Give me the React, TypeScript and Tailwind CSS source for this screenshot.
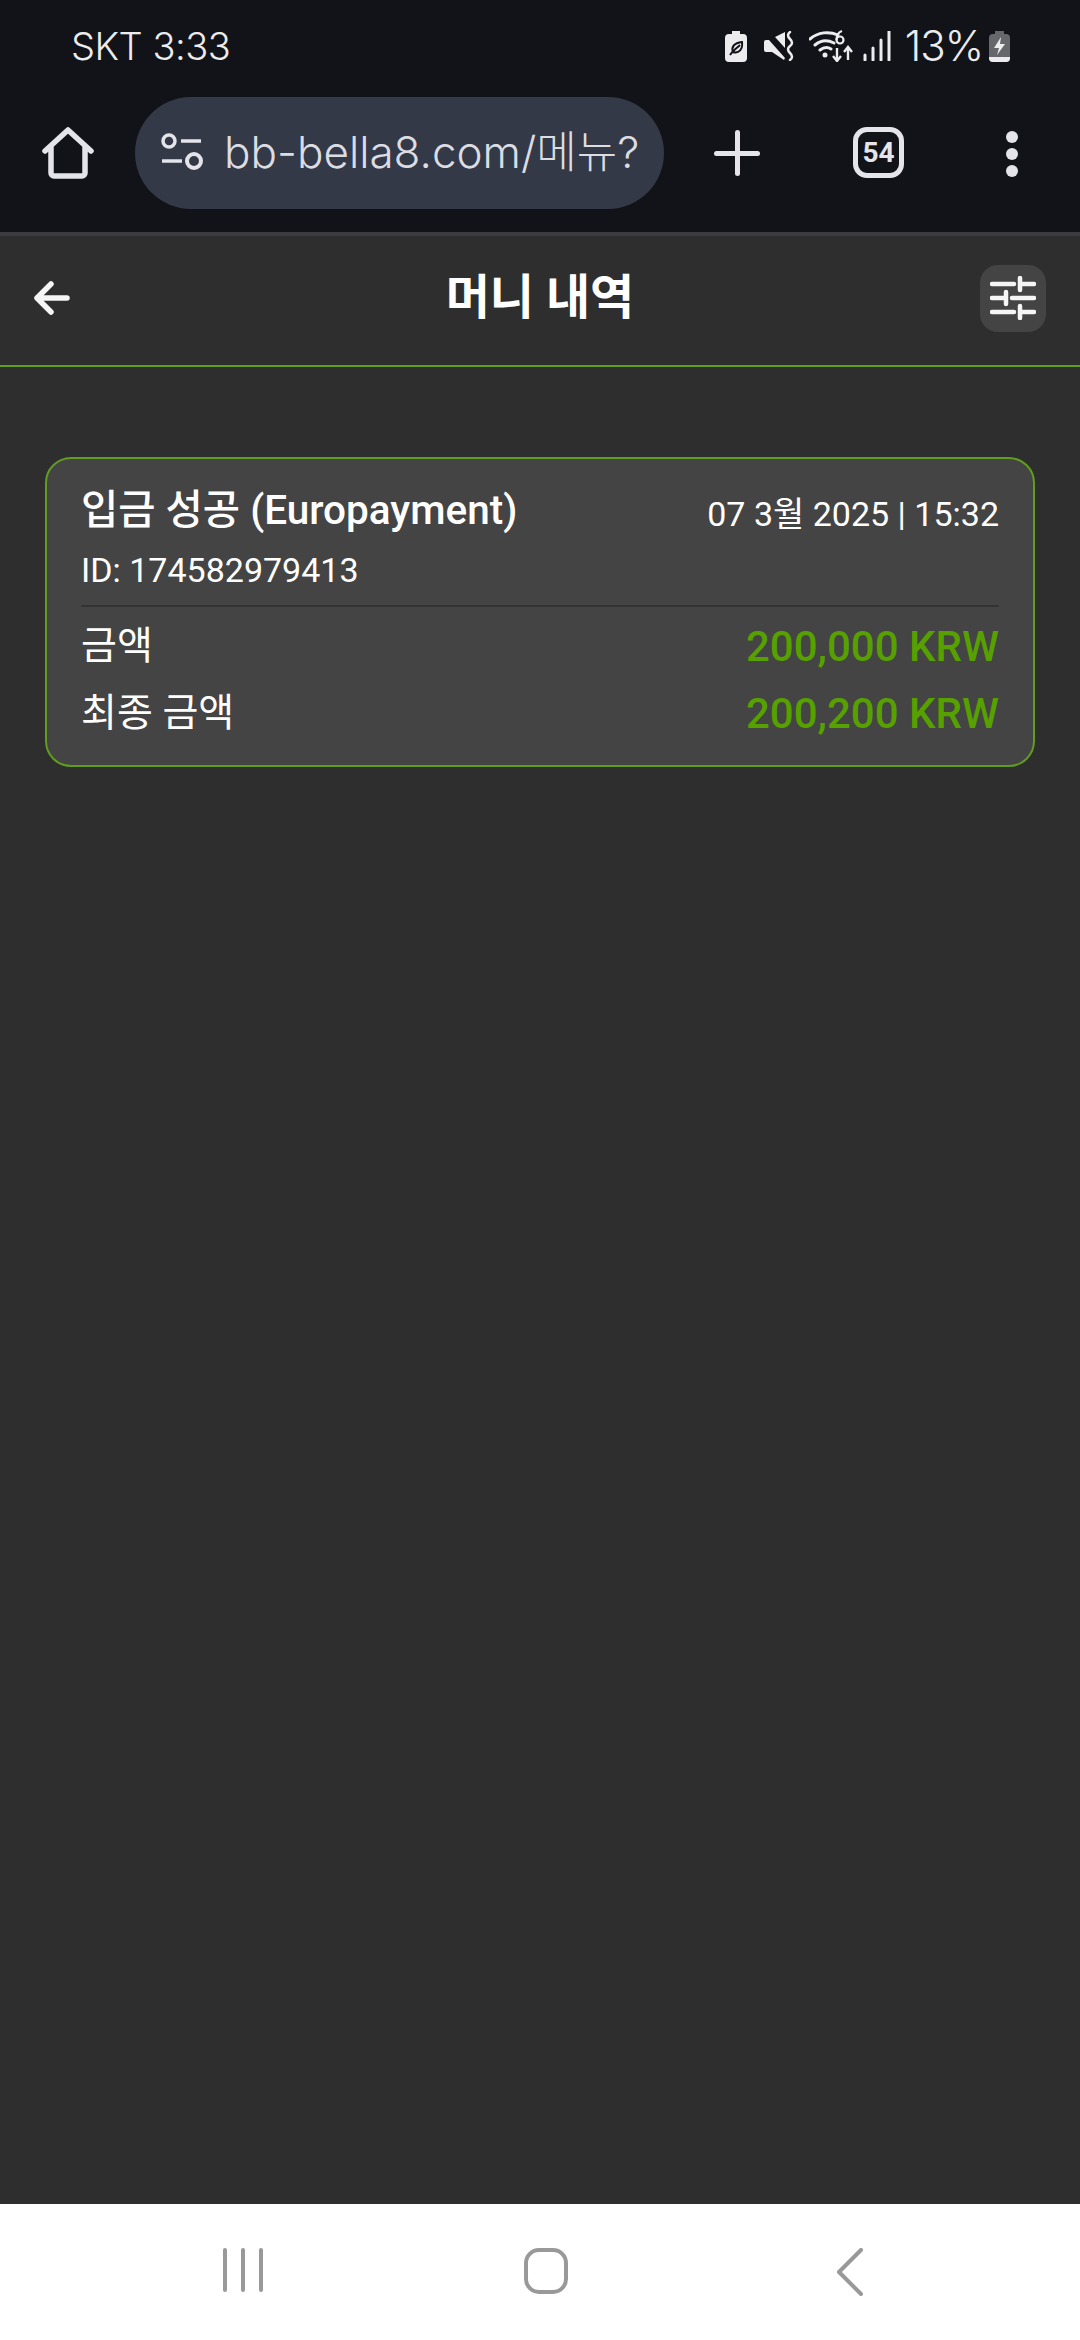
const font = "font-['Roboto','Noto_Sans_CJK_KR',sans-serif]";

const StatusIcons = () => (
	<div className="flex items-center text-[#e8e8ea]">
		<svg width="22" height="31" viewBox="0 0 22 31" className="mr-[17px]">
			<path d="M7 0h8v3h3a4 4 0 0 1 4 4v20a4 4 0 0 1-4 4H4a4 4 0 0 1-4-4V7a4 4 0 0 1 4-4h3z" fill="#ececee" />
			<path d="M5 24C8 19 12 17 15 14M8 21c-2-5 1-9 9-10 1 7-3 12-9 10z" fill="none" stroke="#111318" strokeWidth="2" />
		</svg>
		<svg width="31" height="30" viewBox="0 0 31 30" className="mr-[14px]">
			<path d="M0 11q0-2 2-2h3l16 18-1 2-12-8H2q-2 0-2-2zM11 6l10-5v16z" fill="#ececee" />
			<path d="M26 1q-4 3 0 7t0 7 0 7 0 7" fill="none" stroke="#ececee" strokeWidth="2.5" strokeLinecap="round" />
		</svg>
		<svg width="46" height="32" viewBox="0 0 46 32" className="mr-[8px]">
			<path d="M1 9C9 2 20 1 29 5M6 15c6-5 13-5 19-2M11 20c4-3 8-3 11-1" fill="none" stroke="#ececee" strokeWidth="3" strokeLinecap="round" />
			<circle cx="16" cy="25" r="2.5" fill="#ececee" />
			<circle cx="31" cy="10" r="3.5" fill="none" stroke="#ececee" strokeWidth="2.2" />
			<path d="M27.5 10C27.5 5 30 2 33 1" fill="none" stroke="#ececee" strokeWidth="2.2" />
			<path d="M28 18v12M24 26l4 5 4-5M39 30V18M35 22l4-5 4 5" fill="none" stroke="#ececee" strokeWidth="2.4" />
		</svg>
		<svg width="28" height="30" viewBox="0 0 28 30" className="mr-[14px]">
			<path d="M2 24v5M10 17v12M18 9v20M26 0v29" stroke="#ececee" strokeWidth="3" strokeLinecap="round" />
		</svg>
		<span className="text-[42px] leading-none font-light font-['Inter',sans-serif] tracking-[-1px] text-[#ececee]">13%</span>
		<svg width="21" height="31" viewBox="0 0 21 31" className="ml-[6px]">
			<path d="M6 0h9v3h2a4 4 0 0 1 4 4v20a4 4 0 0 1-4 4H4a4 4 0 0 1-4-4V7a4 4 0 0 1 4-4h2z" fill="#66676a" />
			<path d="M0 26h21v1a4 4 0 0 1-4 4H4a4 4 0 0 1-4-4z" fill="#ececee" />
			<path d="M12 6L5 17h5l-2 7 8-11h-5z" fill="#ececee" />
		</svg>
	</div>
);

const Row = ({ label, value }: { label: string; value: string }) => (
	<div className="flex items-center justify-between h-[45px]">
		<span className="text-[39px] text-white">{label}</span>
		<span className="text-[42px] font-medium text-[#56a000]">{value}</span>
	</div>
);

export default function App() {
	return (
		<div className={`w-[1080px] h-[2340px] flex flex-col bg-[#2e2e2e] overflow-hidden ${font}`}>
			<div className="h-[94px] shrink-0 bg-[#111318] pl-[71px] pr-[70px] pb-[2px] flex items-center justify-between">
				<span className="text-[38px] font-light font-['Inter',sans-serif] tracking-[-0.5px] text-[#ececee]">SKT 3:33</span>
				<StatusIcons />
			</div>

			<div className="h-[138px] shrink-0 bg-[#111318] flex items-start pt-[3px]">
				<svg width="52" height="52" viewBox="0 0 52 52" className="ml-[42px] mt-[30px] shrink-0">
					<path d="M3 24L26 3l23 21M9 20v26a3 3 0 0 0 3 3h28a3 3 0 0 0 3-3V20" fill="none" stroke="#e4e4ea" strokeWidth="5.5" strokeLinecap="round" strokeLinejoin="round" />
				</svg>
				<div className="ml-[41px] w-[529px] h-[112px] shrink-0 rounded-full bg-[#333947] flex items-center pl-[25px] pb-[2px]">
					<svg width="44" height="38" viewBox="0 0 44 38" className="shrink-0">
						<circle cx="9" cy="8" r="6" fill="none" stroke="#e4e4ea" strokeWidth="3.5" />
						<path d="M21 8h20M2 28h20" stroke="#e4e4ea" strokeWidth="3.5" />
						<circle cx="34" cy="28" r="7" fill="none" stroke="#e4e4ea" strokeWidth="4" />
					</svg>
					<span className="ml-[20px] whitespace-nowrap text-[44px] font-['Inter','Noto_Sans_CJK_KR',sans-serif] font-light text-[#dcdde3]">
						bb-bella8.com/메뉴?
					</span>
				</div>
				<div className="ml-[50px] mt-[33px] relative w-[46px] h-[46px] shrink-0">
					<div className="absolute left-0 right-0 top-[21px] h-[5px] rounded-full bg-[#e4e4ea]" />
					<div className="absolute top-0 bottom-0 left-[21px] w-[5px] rounded-full bg-[#e4e4ea]" />
				</div>
				<div className="ml-[93px] mt-[30px] w-[51px] h-[51px] shrink-0 rounded-[14px] border-[5px] border-[#e4e4ea] flex items-center justify-center text-[28px] font-bold leading-none text-[#e4e4ea]">
					54
				</div>
				<div className="ml-[102px] mt-[34px] flex flex-col gap-[5px] shrink-0">
					<div className="w-[12px] h-[12px] rounded-full bg-[#e4e4ea]" />
					<div className="w-[12px] h-[12px] rounded-full bg-[#e4e4ea]" />
					<div className="w-[12px] h-[12px] rounded-full bg-[#e4e4ea]" />
				</div>
			</div>

			<div className="h-[4px] shrink-0 bg-[#3b3c42]" />

			<div className="h-[131px] shrink-0 border-b-2 border-[#5f9c1f] flex items-center justify-between pl-[34px] pr-[34px] pb-[5px] relative">
				<svg width="36" height="34" viewBox="0 0 36 34">
					<path d="M33 17H4M17 3L3 17l14 14" fill="none" stroke="#f5f5f5" strokeWidth="5.5" strokeLinecap="round" strokeLinejoin="round" />
				</svg>
				<div className="absolute left-0 right-0 text-center text-[48px] font-bold text-white">머니 내역</div>
				<div className="w-[66px] h-[67px] rounded-[18px] bg-[#444444] flex items-center justify-center">
					<svg width="46" height="44" viewBox="0 0 46 44">
						<path d="M2 8h22M30 8h14M30 2v12M2 22h14M16 16v12M22 22h22M2 36h22M30 36h14M30 30v12" fill="none" stroke="#f5f5f5" strokeWidth="4.5" strokeLinecap="round" />
					</svg>
				</div>
			</div>

			<div className="flex-1 pt-[90px] px-[45px]">
				<div className="h-[310px] rounded-[26px] border-2 border-[#5f9c1f] bg-[#444444] px-[34px] pt-[25px]">
					<div className="flex items-center justify-between h-[52px]">
						<span className="text-[40.5px] font-medium text-white">입금 성공 (Europayment)</span>
						<span className="text-[34px] text-white mt-[9px]">07 3월 2025 | 15:32</span>
					</div>
					<div className="mt-[12px] h-[44px] flex items-center text-[34px] text-white">ID: 174582979413</div>
					<div className="mt-[13px] h-[2px] bg-[#333333]" />
					<div className="mt-[17px] flex flex-col gap-[22px]">
						<Row label="금액" value="200,000 KRW" />
						<Row label="최종 금액" value="200,200 KRW" />
					</div>
				</div>
			</div>

			<div className="h-[136px] shrink-0 bg-white flex items-start pt-[44px]">
				<div className="ml-[223px] flex gap-[14px]">
					<div className="w-[4px] h-[44px] rounded-full bg-[#999999]" />
					<div className="w-[4px] h-[44px] rounded-full bg-[#999999]" />
					<div className="w-[4px] h-[44px] rounded-full bg-[#999999]" />
				</div>
				<div className="ml-[261px] w-[44px] h-[46px] rounded-[15px] border-[4px] border-[#999999]" />
				<svg width="28" height="48" viewBox="0 0 28 48" className="ml-[268px]">
					<path d="M25 2L3 24l22 22" fill="none" stroke="#999999" strokeWidth="4" strokeLinecap="round" strokeLinejoin="round" />
				</svg>
			</div>
		</div>
	);
}
